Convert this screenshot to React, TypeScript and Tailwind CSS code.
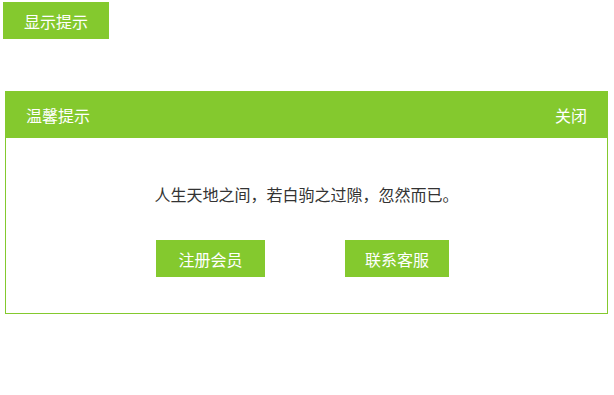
import React from "react";

const font = {
  fontFamily: '"Microsoft YaHei", "Noto Sans CJK SC", sans-serif',
};

export default function App() {
  return (
    <div className="min-h-screen bg-white" style={font}>
      <button className="ml-[3px] mt-[2px] flex h-[37px] w-[106px] items-center justify-center bg-[#84c92e] text-[16px] text-white">
        显示提示
      </button>

      <div className="ml-[5px] mt-[52px] w-[603px] border border-solid border-[color:#84c92e]">
        <div className="flex h-[46px] items-center justify-between bg-[#84c92e] pl-[20px] pr-[20px] text-[16px] text-white">
          <span>温馨提示</span>
          <span>关闭</span>
        </div>
        <div className="flex flex-col items-center pb-[36px] pt-[44px]">
          <p className="text-[16px] leading-[24px] text-[#333333]">
            人生天地之间，若白驹之过隙，忽然而已。
          </p>
          <div className="mt-[34px] flex gap-[80px] pr-[8px]">
            <button className="flex h-[37px] w-[109px] items-center justify-center bg-[#84c92e] text-[16px] text-white">
              注册会员
            </button>
            <button className="flex h-[37px] w-[104px] items-center justify-center bg-[#84c92e] text-[16px] text-white">
              联系客服
            </button>
          </div>
        </div>
      </div>
    </div>
  );
}
